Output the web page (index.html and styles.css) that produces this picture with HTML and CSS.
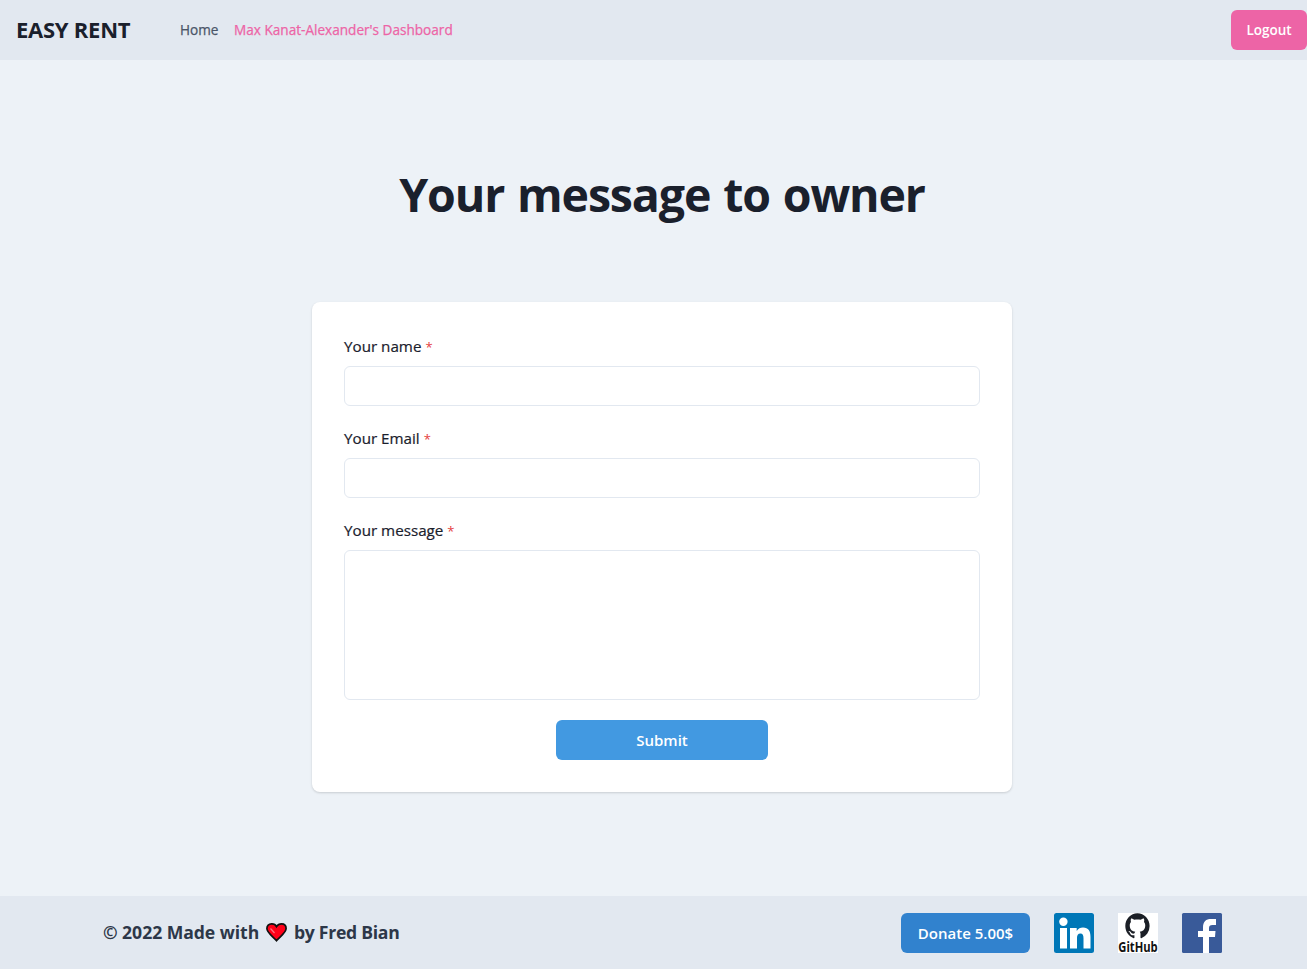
FILE: index.html
```html
<!DOCTYPE html>
<html lang="en">
<head>
<meta charset="utf-8">
<title>Easy Rent</title>
<link rel="stylesheet" href="styles.css">
</head>
<body>
<header class="navbar">
  <span class="brand">EASY RENT</span>
  <nav class="links">
    <a class="link home">Home</a>
    <a class="link dashboard">Max Kanat-Alexander's Dashboard</a>
  </nav>
  <button class="button logout">Logout</button>
</header>
<main class="content">
  <h1 class="title">Your message to owner</h1>
  <form class="card">
    <div class="field">
      <label class="label name" for="name">Your name <span class="star">*</span></label>
      <input class="input" id="name" type="text">
    </div>
    <div class="field">
      <label class="label email" for="email">Your Email <span class="star">*</span></label>
      <input class="input" id="email" type="email">
    </div>
    <div class="field">
      <label class="label message" for="message">Your message <span class="star">*</span></label>
      <textarea class="input area" id="message"></textarea>
    </div>
    <button class="button submit" type="button">Submit</button>
  </form>
</main>
<footer class="footer">
  <p class="credit"><span class="made">© 2022 Made with</span>
    <svg class="heart" viewBox="0 0 21 19"><path d="M10.5 3.6C9 .6 6.600.9 5.500.9 2.800.9.900 2.700.900 5.600.900 9.300 5 12 10.500 17.700 16 12 20.100 9.300 20.100 5.600 20.100 2.700 18.200.9 15.500.9 13.500.9 11.700 1.800 10.500 3.600Z" fill="#ff0018" stroke="#111" stroke-width="1.7"/><path d="M4.500 5.500 8.500 10" stroke="#ff7180" stroke-width="1.200"/></svg>
    <span class="author">by Fred Bian</span></p>
  <div class="socials">
    <button class="button donate">Donate 5.00$</button>
    <svg class="social" viewBox="0 0 40 40"><rect width="40" height="40" rx="2.500" fill="#0077b7"/><circle cx="9.400" cy="8.800" r="4.200" fill="#fff"/><path d="M6 15h7v20.500H6zM16 15h6.700v2.900c1.400-2.200 3.700-3.400 6.300-3.400 5.500 0 7.500 3.500 7.500 9.500v11.500h-7V25.300c0-3.300-.8-4.900-3.100-4.900-2.500 0-3.400 1.900-3.400 4.700v10.400h-7z" fill="#fff"/></svg>
    <svg class="social" viewBox="0 0 40 40"><rect width="40" height="40" fill="#fff"/><path transform="translate(7.300 .2) scale(1.520 1.600)" fill="#1b1f26" d="M8 0C3.580 0 0 3.580 0 8c0 3.540 2.290 6.530 5.470 7.590.4.070.55-.17.55-.38 0-.19-.01-.82-.01-1.490-2.010.37-2.530-.49-2.690-.94-.09-.23-.48-.94-.82-1.130-.28-.15-.68-.52-.01-.53.63-.01 1.080.58 1.230.82.72 1.210 1.870.87 2.330.66.07-.52.28-.87.51-1.070-1.780-.2-3.640-.89-3.640-3.950 0-.87.31-1.590.82-2.150-.08-.2-.36-1.020.08-2.120 0 0 .67-.21 2.200.82.640-.18 1.320-.27 2-.27s1.360.09 2 .27c1.530-1.040 2.200-.82 2.200-.82.440 1.100.160 1.920.080 2.120.510.560.820 1.270.820 2.150 0 3.070-1.870 3.750-3.650 3.950.290.250.540.730.540 1.480 0 1.070-.01 1.930-.01 2.200 0 .21.150.460.550.38A8.010 8.010 0 0 0 16 8c0-4.420-3.580-8-8-8z"/><text class="github-name" x=".3" y="39.300" textLength="39.400" lengthAdjust="spacingAndGlyphs">GitHub</text></svg>
    <svg class="social" viewBox="0 0 40 40"><rect width="40" height="40" rx="1.500" fill="#395a99"/><path d="M21 40V24h-5v-6h5v-3.500C21 8.500 24 6 29 6h5v6h-3.500C28 12 27 13 27 15.300V18h6.500l-.5 6h-6v16z" fill="#fff"/></svg>
  </div>
</footer>
</body>
</html>
```
FILE: styles.css
```css
* { box-sizing: border-box; }
body {
  margin: 0;
  height: 969px;
  display: flex;
  flex-direction: column;
  overflow: hidden;
  background: #edf2f7;
  color: #1a202c;
  font-family: "Open Sans", "Noto Sans", sans-serif;
  font-size: 16px;
  line-height: 24px;
}
.navbar {
  height: 60px;
  flex: none;
  display: flex;
  align-items: center;
  padding-left: 16px;
  background: #e2e8f0;
}
.brand {
  width: 164px;
  white-space: nowrap;
  font-size: 22px;
  font-weight: 700;
  letter-spacing: -.25px;
  padding-bottom: 2px;
}
.links { display: flex; gap: 16px; flex: 1; }
.link {
  font-size: 13.6px;
  white-space: nowrap;
  -webkit-text-stroke: .25px currentColor;
}
.home { color: #4a5568; width: 38px; }
.dashboard { color: #ed64a6; }
.button {
  height: 40px;
  border: 0;
  border-radius: 6px;
  padding: 0;
  color: #fff;
  font: 600 15px/24px "Open Sans", sans-serif;
  white-space: nowrap;
}
.logout { width: 76px; background: #ed64a6; font-size: 13.5px; }
.content {
  flex: 1;
  width: 1324px;
  display: flex;
  flex-direction: column;
  align-items: center;
}
.title {
  margin: 105px 0 79px;
  font-size: 46.5px;
  line-height: 58px;
  font-weight: 700;
  letter-spacing: -1.15px;
  word-spacing: 2px;
  white-space: nowrap;
}
.card {
  width: 700px;
  height: 490px;
  padding: 32px;
  display: flex;
  flex-direction: column;
  gap: 20px;
  background: #fff;
  border-radius: 8px;
  box-shadow: 0 1px 3px rgba(0, 0, 0, .1), 0 1px 2px rgba(0, 0, 0, .06);
}
.field { display: flex; flex-direction: column; gap: 8px; }
.label {
  height: 24px;
  font-size: 15.2px;
  -webkit-text-stroke: .2px currentColor;
}
.star { color: #e53e3e; font-size: 13px; line-height: 1; -webkit-text-stroke: 0; }
.input {
  width: 100%;
  height: 40px;
  border: 1px solid #e2e8f0;
  border-radius: 6px;
  background: #fff;
}
.area { height: 150px; resize: none; display: block; }
.submit { width: 212px; align-self: center; background: #4299e1; }
.footer {
  height: 73px;
  flex: none;
  display: flex;
  align-items: center;
  justify-content: space-between;
  padding: 0 85px 0 103px;
  background: #e2e8f0;
}
.credit {
  margin: 0;
  padding-bottom: 1px;
  display: flex;
  align-items: center;
  color: #2d3748;
  font-size: 17.6px;
  font-weight: 700;
  white-space: nowrap;
}
.made { width: 163px; letter-spacing: -.05px; }
.author { letter-spacing: -.28px; }
.heart { width: 21px; height: 19px; margin-right: 7px; fill: none; }
.socials { display: flex; gap: 24px; }
.donate { width: 129px; background: #3182ce; }
.social { width: 40px; height: 40px; display: block; overflow: visible; }
.github-name { font: 700 14.5px "Open Sans", sans-serif; fill: #111; }
```
